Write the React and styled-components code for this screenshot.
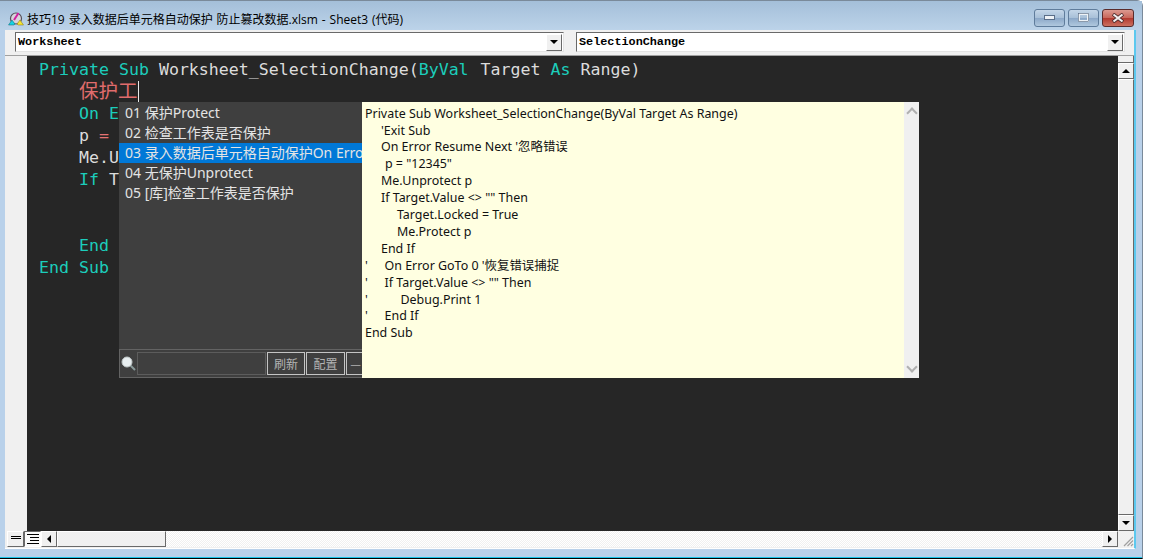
import styled, { createGlobalStyle } from "styled-components";

const GlobalStyle = createGlobalStyle`
  html, body { margin: 0; padding: 0; background: #fff; }
  body { width: 1149px; height: 559px; overflow: hidden; }
  * { box-sizing: border-box; }
`;

const listItems = [
  "01 保护Protect",
  "02 检查工作表是否保护",
  "03 录入数据后单元格自动保护On Error Resume Next",
  "04 无保护Unprotect",
  "05 [库]检查工作表是否保护",
];

const tipLines = [
  "Private Sub Worksheet_SelectionChange(ByVal Target As Range)",
  "    'Exit Sub",
  "    On Error Resume Next '忽略错误",
  "     p = \"12345\"",
  "    Me.Unprotect p",
  "    If Target.Value <> \"\" Then",
  "        Target.Locked = True",
  "        Me.Protect p",
  "    End If",
  "'    On Error GoTo 0 '恢复错误捕捉",
  "'    If Target.Value <> \"\" Then",
  "'        Debug.Print 1",
  "'    End If",
  "End Sub",
];

// leading spaces are wider in the tooltip than between words
const TipText = ({ line }) => {
  const [, lead, rest] = line.match(/^('?\s*)(.*)$/);
  return (
    <TipLine>
      <Indent>{lead}</Indent>
      {rest}
    </TipLine>
  );
};

const App = () => (
  <>
    <GlobalStyle />
    <Window>
      <TitleBar>
        <AppIcon />
        <TitleText>技巧19 录入数据后单元格自动保护 防止篡改数据.xlsm - Sheet3 (代码)</TitleText>
        <Caption>
          <CaptionButton><MinGlyph /></CaptionButton>
          <CaptionButton><MaxGlyph /></CaptionButton>
          <CaptionButton $close><CloseGlyph /></CaptionButton>
        </Caption>
      </TitleBar>
      <Client>
        <ComboRow>
          <Combo>
            <ComboText>Worksheet</ComboText>
            <ComboArrow><Triangle dir="down" /></ComboArrow>
          </Combo>
          <Combo>
            <ComboText>SelectionChange</ComboText>
            <ComboArrow><Triangle dir="down" /></ComboArrow>
          </Combo>
        </ComboRow>
        <EditorFrame>
          <EditorMain>
            <Margin />
            <CodePane>
              <CodeLine><Kw>Private Sub</Kw> Worksheet_SelectionChange(<Kw $gap>ByVal</Kw> Target <Kw>As</Kw> Range)</CodeLine>
              <CodeLine>{"    "}<Typed>保护工</Typed><Caret /></CodeLine>
              <CodeLine>{"    "}<Kw>On Error Resume Next</Kw></CodeLine>
              <CodeLine>{"    "}p <Equals>=</Equals> "12345"</CodeLine>
              <CodeLine>{"    "}Me.Unprotect p</CodeLine>
              <CodeLine>{"    "}<Kw>If</Kw> Target.Value</CodeLine>
              <CodeLine> </CodeLine>
              <CodeLine> </CodeLine>
              <CodeLine>{"    "}<Kw>End If</Kw></CodeLine>
              <CodeLine><Kw>End Sub</Kw></CodeLine>

              <Popup>
                <ListPanel>
                  <ListRows>
                    {listItems.map((item, i) => (
                      <ListRow key={item} $active={i === 2}>{item}</ListRow>
                    ))}
                  </ListRows>
                  <SearchBar>
                    <SearchIcon />
                    <SearchInput />
                    <DarkButton $width={38}>刷新</DarkButton>
                    <DarkButton $width={39}>配置</DarkButton>
                    <DarkButton $width={19}>—</DarkButton>
                  </SearchBar>
                </ListPanel>
                <TipPanel>
                  {tipLines.map((line, i) => (
                    <TipText key={i} line={line} />
                  ))}
                </TipPanel>
                <TipScroll>
                  <Chevron />
                  <Chevron $down />
                </TipScroll>
              </Popup>
            </CodePane>
            <VScroll>
              <Splitter />
              <ScrollButton><Triangle dir="up" /></ScrollButton>
              <VThumb />
              <ScrollButton><Triangle dir="down" /></ScrollButton>
            </VScroll>
          </EditorMain>
          <BottomBar>
            <ViewButton><LinesIcon rows={2} /></ViewButton>
            <ViewButton $pressed><LinesIcon rows={4} /></ViewButton>
            <ScrollButton><Triangle dir="left" /></ScrollButton>
            <HThumb />
            <HTrack />
            <ScrollButton><Triangle dir="right" /></ScrollButton>
            <SizeGrip><GripIcon /></SizeGrip>
          </BottomBar>
        </EditorFrame>
      </Client>
    </Window>
  </>
);

export default App;

const Triangle = ({ dir }) => {
  const points = {
    up: "1,7 9,7 5,3",
    down: "1,3 9,3 5,7",
    left: "7,1 7,9 3,5",
    right: "3,1 3,9 7,5",
  }[dir];
  return (
    <svg width="10" height="10" viewBox="0 0 10 10">
      <polygon points={points} fill="#000" />
    </svg>
  );
};

const AppIcon = () => (
  <svg width="16" height="14" viewBox="0 0 16 14" style={{ flexShrink: 0 }}>
    <circle cx="8" cy="6.500" r="5.500" fill="#d8d4dc" stroke="#55505a" strokeWidth="1.200" />
    <path d="M0.500 13l3.500-5 3 4-1 1z" fill="#14d4e4" stroke="#106070" strokeWidth=".5" />
    <path d="M15.500 13l-3.500-5-3 4 1 1z" fill="#f4e430" stroke="#807010" strokeWidth=".5" />
    <path d="M6 8l4.500-7" stroke="#d020a0" strokeWidth="2" />
  </svg>
);

const MinGlyph = () => (
  <svg width="12" height="6" viewBox="0 0 12 6"><rect x=".5" y=".5" width="10" height="4" fill="#eef2f6" stroke="#5a6e88" /></svg>
);

const MaxGlyph = () => (
  <svg width="12" height="10" viewBox="0 0 12 10"><rect x="1" y="1" width="9" height="7" fill="none" stroke="#eef2f6" strokeWidth="2" /><rect x=".5" y=".5" width="10" height="8" fill="none" stroke="#4a5e78" strokeWidth=".6" /></svg>
);

const CloseGlyph = () => (
  <svg width="14" height="10" viewBox="0 0 14 10">
    <path d="M2 1l10 8M12 1L2 9" stroke="#4a2a2a" strokeWidth="3.600" />
    <path d="M2.500 1.500l9 7M11.500 1.500l-9 7" stroke="#f4eeee" strokeWidth="2.200" />
  </svg>
);

const LinesIcon = ({ rows }) => (
  <svg width="14" height="14" viewBox="0 0 14 14">
    {rows === 2 ? (
      <path d="M2 4.500h10M2 6.500h10" stroke="#000" />
    ) : (
      <path d="M1 2.500h12M4 5.500h9M4 8.500h9M1 11.500h12" stroke="#000" />
    )}
  </svg>
);

const GripIcon = () => (
  <svg width="12" height="12" viewBox="0 0 12 12">
    <path d="M11 2L2 11M11 5.500L5.500 11M11 9L9 11" stroke="#a0a0a0" strokeWidth="1.200" />
  </svg>
);

const SearchIcon = () => (
  <svg width="15" height="15" viewBox="0 0 15 15" style={{ flexShrink: 0 }}>
    <path d="M9 9l5 5" stroke="#8a9a9a" strokeWidth="2" />
    <circle cx="6" cy="6" r="5" fill="#e8eef0" stroke="#c0c8c8" />
  </svg>
);

const Window = styled.div`
  width: 1143px;
  height: 559px;
  display: flex;
  flex-direction: column;
  padding: 0 6px 9px 5px;
  background: #b9d1ea;
  border-top: 1px solid #7a8a9a;
  border-right: 1px solid #7a8a9a;
  border-bottom: 1px solid #000;
  border-top-right-radius: 6px;
  box-shadow: inset 0 -1px 0 #19c4e8;
`;

const TitleBar = styled.div`
  height: 29px;
  flex-shrink: 0;
  display: flex;
  align-items: center;
  gap: 3px;
  margin: 0 -6px 0 -5px;
  padding: 6px 8px 0 8px;
  background: linear-gradient(to bottom, #a4bfd9, #bcd3e9);
`;

const TitleText = styled.div`
  flex: 1;
  font: 12px "Open Sans", "Noto Sans CJK SC", sans-serif;
  word-spacing: 0.800px;
  color: #000;
  white-space: nowrap;
`;

const Caption = styled.div`
  display: flex;
  gap: 3px;
  align-self: flex-start;
  margin-top: 2px;
`;

const CaptionButton = styled.div`
  width: ${(p) => (p.$close ? "32px" : "31px")};
  height: 18px;
  display: flex;
  align-items: center;
  justify-content: center;
  border: 1px solid ${(p) => (p.$close ? "#5a2c2c" : "#5f7c9b")};
  border-radius: 3px;
  background: ${(p) =>
    p.$close
      ? "linear-gradient(to bottom, #dc9a90 0%, #c8685c 48%, #b23a30 52%, #cc7060 100%)"
      : "linear-gradient(to bottom, #c4d6e8 0%, #a8c0d8 48%, #8ca8c8 52%, #b0c8de 100%)"};
`;

const Client = styled.div`
  flex: 1;
  display: flex;
  flex-direction: column;
  min-height: 0;
  background: #f0f0f0;
  border-bottom: 1px solid #fff;
  border-right: 2px solid #5cc8ee;
`;

const ComboRow = styled.div`
  height: 25px;
  flex-shrink: 0;
  display: flex;
  gap: 12px;
  padding: 2px 0 0 10px;
`;

const Combo = styled.div`
  width: 549px;
  height: 20px;
  display: flex;
  align-items: center;
  justify-content: space-between;
  background: #fff;
  border: 1px solid;
  border-color: #696969 #e3e3e3 #e3e3e3 #696969;
`;

const ComboText = styled.span`
  font: bold 11.800px "Liberation Mono", monospace;
  padding-left: 2px;
  color: #000;
`;

const ComboArrow = styled.div`
  width: 16px;
  height: 17px;
  margin-right: 1px;
  display: flex;
  align-items: center;
  justify-content: center;
  background: #f0f0f0;
  border: 1px solid;
  border-color: #fff #696969 #696969 #fff;
`;

const EditorFrame = styled.div`
  flex: 1;
  min-height: 0;
  display: flex;
  flex-direction: column;
  margin: 0 0 1px 0;
  padding-left: 2px;
  border-top: 1px solid #a0a0a0;
`;

const EditorMain = styled.div`
  flex: 1;
  min-height: 0;
  display: flex;
`;

const Margin = styled.div`
  width: 20px;
  flex-shrink: 0;
  background: #f0f0f0;
`;

const CodePane = styled.div`
  flex: 1;
  position: relative;
  padding: 3px 0 0 12px;
  background: #262626;
  overflow: hidden;
`;

const CodeLine = styled.div`
  height: 22px;
  line-height: 22px;
  font-family: "DejaVu Sans Mono", "Noto Sans CJK SC", monospace;
  font-size: 16.600px;
  color: #dcdcdc;
  white-space: pre;
`;

const Kw = styled.span`
  color: #1ccdbb;
  margin-right: ${(p) => (p.$gap ? "2px" : "0")};
`;

const Typed = styled.span`
  display: inline-block;
  height: 22px;
  line-height: 18px;
  color: #e06c6c;
  font-family: "Noto Sans CJK SC", sans-serif;
  font-size: 19.500px;
  font-weight: 400;
`;

const Equals = styled.span`
  color: #e57373;
`;

const Caret = styled.span`
  display: inline-block;
  width: 1px;
  height: 21px;
  margin-left: 1px;
  vertical-align: top;
  background: #e8e8e8;
`;

const Popup = styled.div`
  position: absolute;
  left: 92px;
  top: 46px;
  width: 800px;
  height: 276px;
  display: flex;
  background: #3f3f3f;
`;

const ListPanel = styled.div`
  width: 243px;
  flex-shrink: 0;
  display: flex;
  flex-direction: column;
  overflow: hidden;
  background: #3f3f3f;
`;

const ListRows = styled.div`
  flex: 1;
  padding-top: 1px;
`;

const ListRow = styled.div`
  height: 20px;
  padding-left: 6px;
  font: 14px/20px "Noto Sans", "Noto Sans CJK SC", sans-serif;
  color: #e4e4e4;
  white-space: nowrap;
  overflow: hidden;
  background: ${(p) => (p.$active ? "#0078d7" : "transparent")};
`;

const SearchBar = styled.div`
  height: 29px;
  flex-shrink: 0;
  display: flex;
  align-items: center;
  gap: 1px;
  padding: 0 0 0 1px;
  border-top: 1px solid #636363;
  border-left: 1px solid #636363;
  border-bottom: 1px solid #636363;
`;

const SearchInput = styled.div`
  width: 129px;
  height: 23px;
  flex-shrink: 0;
  background: #3f3f3f;
  border: 1px solid #5c5c5c;
`;

const DarkButton = styled.div`
  width: ${(p) => p.$width}px;
  height: 23px;
  flex-shrink: 0;
  font: 12px/21px "Noto Sans CJK SC", sans-serif;
  text-align: center;
  color: #b4b4b4;
  border: 1px solid #c4c4c4;
  overflow: hidden;
`;

const TipPanel = styled.div`
  flex: 1;
  padding: 3.600px 0 0 3px;
  background: #ffffe1;
`;

const TipLine = styled.div`
  height: 16.920px;
  font: 12.450px/16px "Noto Sans", "Noto Sans CJK SC", sans-serif;
  color: #111;
  white-space: pre;
`;

const Indent = styled.span`
  letter-spacing: 0.760px;
`;

const TipScroll = styled.div`
  width: 15px;
  flex-shrink: 0;
  display: flex;
  flex-direction: column;
  justify-content: space-between;
  align-items: center;
  padding: 5px 0;
  background: #f0f0f0;
`;

const Chevron = styled.div`
  width: 8px;
  height: 8px;
  margin: 2px 0;
  border-top: 2px solid #b0b0b0;
  border-left: 2px solid #b0b0b0;
  transform: ${(p) => (p.$down ? "rotate(225deg)" : "rotate(45deg)")};
`;

const VScroll = styled.div`
  width: 16px;
  flex-shrink: 0;
  display: flex;
  flex-direction: column;
  background: #f0f0f0;
`;

const Splitter = styled.div`
  height: 7px;
  flex-shrink: 0;
  background: #f0f0f0;
  border-bottom: 1px solid #696969;
  border-right: 1px solid #696969;
`;

const ScrollButton = styled.div`
  width: 16px;
  height: 16px;
  flex-shrink: 0;
  display: flex;
  align-items: center;
  justify-content: center;
  background: #f0f0f0;
  border: 1px solid;
  border-color: #fff #696969 #696969 #fff;
`;

const VThumb = styled.div`
  flex: 1;
  background: #f0f0f0;
  border: 1px solid;
  border-color: #fff #696969 #696969 #fff;
`;

const BottomBar = styled.div`
  height: 16px;
  flex-shrink: 0;
  display: flex;
  background: #f0f0f0;
`;

const ViewButton = styled.div`
  width: 17px;
  height: 16px;
  flex-shrink: 0;
  display: flex;
  align-items: center;
  justify-content: center;
  background: ${(p) => (p.$pressed ? "#fafafa" : "#f0f0f0")};
  border: 1px solid;
  border-color: ${(p) =>
    p.$pressed ? "#696969 #fff #fff #696969" : "#fff #696969 #696969 #fff"};
`;

const HThumb = styled.div`
  width: 109px;
  height: 16px;
  flex-shrink: 0;
  background: #f0f0f0;
  border: 1px solid;
  border-color: #fff #696969 #696969 #fff;
`;

const HTrack = styled.div`
  flex: 1;
  background: repeating-conic-gradient(#ffffff 0% 25%, #f0f0f0 0% 50%) 0 0 / 2px 2px;
`;

const SizeGrip = styled.div`
  width: 16px;
  height: 16px;
  flex-shrink: 0;
  display: flex;
  align-items: flex-end;
  justify-content: flex-end;
`;
